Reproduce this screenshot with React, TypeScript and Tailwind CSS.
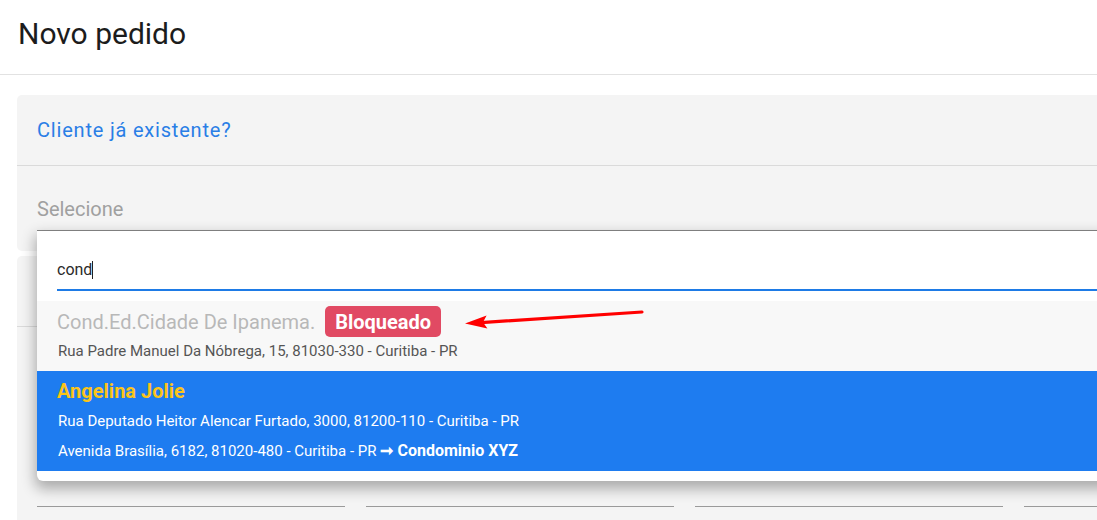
export default function App() {
  return (
    <div
      className="relative w-[1097px] h-[520px] overflow-hidden bg-white"
      style={{ fontFamily: 'Roboto, "Liberation Sans", sans-serif' }}
    >
      <div className="h-[75px] border-b border-[#e2e2e2] flex items-center pl-[18px]">
        <h1 className="text-[30px] leading-[36px] text-[#1c1c1c] pb-[6px]">Novo pedido</h1>
      </div>

      <div className="pl-[17px] pt-[20px]">
        {/* Card 1 */}
        <div className="relative w-[1100px] bg-[#f4f4f4] rounded-[5px]">
          <div className="h-[71px] border-b border-[#dadada] flex items-center px-5">
            <span className="text-[20px] text-[#2a7ee6] tracking-[0.8px]">Cliente já existente?</span>
          </div>
          <div className="px-5 pt-[31px] pb-[20px]">
            <div className="border-b border-[#8a8a8a] pb-[9px]">
              <span className="block text-[20px] leading-[24px] text-[#a0a0a0]">Selecione</span>
            </div>
          </div>

          {/* Dropdown */}
          <div className="absolute left-[20px] top-[136px] w-[1100px] h-[250px] bg-white rounded-b-[6px] shadow-[0_6px_14px_2px_rgba(0,0,0,0.3)] z-10 flex flex-col">
            <div className="px-5 pt-[27px] pb-[10px]">
              <div className="border-b-2 border-[#1e7be6] pb-[7px]">
                <span className="text-[16px] leading-[24px] text-[#2a2a2a] inline-flex items-center">
                  cond<span className="inline-block w-px h-[18px] bg-[#222]" />
                </span>
              </div>
            </div>
            <div className="bg-[#f8f8f8] h-[70px] px-5 pt-[5px]">
              <div className="flex items-center gap-[10px] h-[31px]">
                <span className="text-[20px] text-[#b8b8b8]">Cond.Ed.Cidade De Ipanema.</span>
                <span className="h-[31px] px-[10px] rounded-[5px] bg-[#e14a63] text-white text-[20px] font-bold flex items-center">
                  Bloqueado
                </span>
              </div>
              <div className="mt-[4px] text-[15px] leading-[20px] text-[#555] pl-px">
                Rua Padre Manuel Da Nóbrega, 15, 81030-330 - Curitiba - PR
              </div>
            </div>
            <div className="bg-[#1e7cf0] h-[100px] px-5 pt-[8px]">
              <div className="text-[20px] leading-[24px] font-bold text-[#fcc419]">Angelina Jolie</div>
              <div className="h-[30px] flex items-center text-[15px] text-white pl-px mt-[3px]">
                Rua Deputado Heitor Alencar Furtado, 3000, 81200-110 - Curitiba - PR
              </div>
              <div className="h-[30px] flex items-center text-[15px] text-white pl-px">
                Avenida Brasília, 6182, 81020-480 - Curitiba - PR
                <span className="font-bold ml-[4px] text-[16px]">➞ Condominio XYZ</span>
              </div>
            </div>
          </div>
        </div>

        {/* Card 2 */}
        <div className="mt-[5px] w-[1100px] h-[300px] bg-[#f4f4f4] rounded-[5px]">
          <div className="h-[71px] border-b border-[#dadada]" />
          <div className="px-5 pt-[139px] grid grid-cols-[308px_308px_308px_308px] gap-x-[21px]">
            <div className="h-[41px] border-b border-[#9a9a9a]" />
            <div className="h-[41px] border-b border-[#9a9a9a]" />
            <div className="h-[41px] border-b border-[#9a9a9a]" />
            <div className="h-[41px] border-b border-[#9a9a9a]" />
          </div>
        </div>
      </div>

      {/* Red annotation arrow */}
      <svg
        className="absolute left-[455px] top-[303px] z-20"
        width="195"
        height="28"
        viewBox="0 0 195 28"
      >
        <line x1="26" y1="19.6" x2="187" y2="9" stroke="#ff0000" strokeWidth="3.2" strokeLinecap="round" />
        <polygon points="10,20.5 31.6,12.6 28,19.3 32.4,25.6" fill="#ff0000" />
      </svg>
    </div>
  );
}
